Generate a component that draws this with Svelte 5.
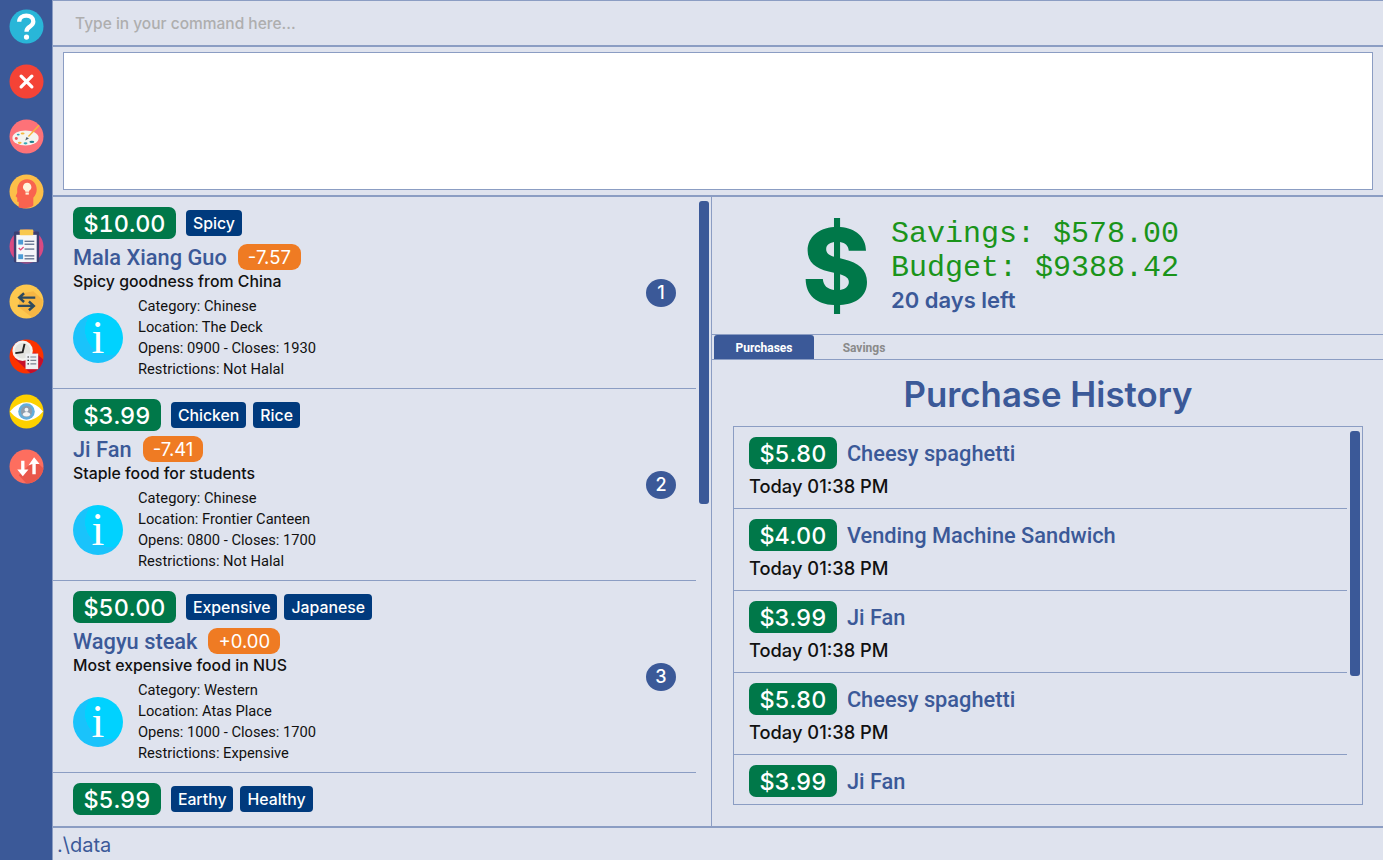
<script lang="ts">
  const foods = [
    { id: 1, price: '$10.00', tags: ['Spicy'], name: 'Mala Xiang Guo', rec: '-7.57', desc: 'Spicy goodness from China', category: 'Chinese', location: 'The Deck', hours: 'Opens: 0900 - Closes: 1930', restrictions: 'Not Halal' },
    { id: 2, price: '$3.99', tags: ['Chicken', 'Rice'], name: 'Ji Fan', rec: '-7.41', desc: 'Staple food for students', category: 'Chinese', location: 'Frontier Canteen', hours: 'Opens: 0800 - Closes: 1700', restrictions: 'Not Halal' },
    { id: 3, price: '$50.00', tags: ['Expensive', 'Japanese'], name: 'Wagyu steak', rec: '+0.00', desc: 'Most expensive food in NUS', category: 'Western', location: 'Atas Place', hours: 'Opens: 1000 - Closes: 1700', restrictions: 'Expensive' },
    // Only the top row of this card is in view
    { id: 4, price: '$5.99', tags: ['Earthy', 'Healthy'] }
  ];

  const purchases = [
    { price: '$5.80', name: 'Cheesy spaghetti', when: 'Today 01:38 PM' },
    { price: '$4.00', name: 'Vending Machine Sandwich', when: 'Today 01:38 PM' },
    { price: '$3.99', name: 'Ji Fan', when: 'Today 01:38 PM' },
    { price: '$5.80', name: 'Cheesy spaghetti', when: 'Today 01:38 PM' },
    { price: '$3.99', name: 'Ji Fan' }
  ];
</script>

<div class="app">
  <nav class="sidebar">
    <!-- help -->
    <svg class="icon" viewBox="0 0 36 36"><circle cx="18" cy="18" r="17.5" fill="#29b6d8"/><path d="M10.500 13C10.500 9 14 6.800 17.800 6.800C22 6.800 25 9.300 25 12.800C25 15.800 23 17 21 18.400C19.200 19.600 18 20.500 18 23.500" fill="none" stroke="#fff" stroke-width="4.400"/><circle cx="18" cy="28.800" r="2.700" fill="#fff"/></svg>
    <!-- close -->
    <svg class="icon" viewBox="0 0 36 36"><circle cx="18" cy="18" r="17.500" fill="#f44336"/><path d="M12.500 12.500l11 11M23.500 12.500l-11 11" stroke="#fff" stroke-width="3.400" stroke-linecap="round"/></svg>
    <!-- palette -->
    <svg class="icon" viewBox="0 0 36 36"><circle cx="18" cy="18" r="17.500" fill="#fd7278"/><ellipse cx="17" cy="19.500" rx="13.500" ry="7.800" fill="#f5f4ef"/><circle cx="7.500" cy="20" r="1.500" fill="#f05a5a"/><ellipse cx="11" cy="24.500" rx="2" ry="1.100" fill="#f6b73c"/><ellipse cx="17" cy="25" rx="2" ry="1.100" fill="#35a7b5"/><ellipse cx="23.500" cy="23.500" rx="2.500" ry="1.200" fill="#1f7f8c"/><ellipse cx="14" cy="15" rx="2" ry="1" fill="#f6b73c"/><ellipse cx="9.500" cy="16" rx="1.500" ry=".9" fill="#35a7b5"/><path d="M20 18L31 6.500" stroke="#f6b73c" stroke-width="1.400"/><path d="M18 18.500l2.500 1.500-3.800 2z" fill="#4f6272"/></svg>
    <!-- head with bulb -->
    <svg class="icon" viewBox="0 0 36 36"><circle cx="18" cy="18" r="17.500" fill="#fcbf49"/><path d="M10 34.500V28.500H8.500V24.500L6.800 22.800C7.500 21 8.500 20 8.500 18.500C7.800 11 12 5.500 18.500 5.500C24.500 5.500 28.500 10 28.500 16C28.500 19.500 27 22 25 24.500V32.500C22 35.500 14 36 10 34.500z" fill="#f9634f"/><path d="M18.700 9a4.300 4.300 0 0 1 2.500 7.800c-.5.500-.6 1-.6 1.500h-3.800c0-.5-.1-1-.6-1.500a4.300 4.300 0 0 1 2.500-7.800z" fill="#fff3dc"/><rect x="17" y="19" width="3.400" height="2.200" fill="#fff3dc"/></svg>
    <!-- clipboard -->
    <svg class="icon" viewBox="0 0 36 36"><circle cx="18" cy="18" r="17.500" fill="#d94a82"/><rect x="5" y="2.500" width="26" height="32" rx="1.500" fill="#3b3f72"/><rect x="7.500" y="6" width="21" height="28" fill="#f5f6fa"/><rect x="11" y="0.500" width="14" height="6" rx="1" fill="#f8c850"/><rect x="9.500" y="11" width="5" height="5" fill="#4c9bd6"/><rect x="16" y="12" width="10" height="1.300" fill="#5b6b8a"/><rect x="16" y="15" width="10" height="1.300" fill="#5b6b8a"/><path d="M10 19.500l2 2 3-3" stroke="#e0457b" stroke-width="1.300" fill="none"/><rect x="16" y="20" width="10" height="1.300" fill="#5b6b8a"/><rect x="9.500" y="26" width="5" height="5" fill="#4c9bd6"/><rect x="16" y="27" width="10" height="1.300" fill="#5b6b8a"/><rect x="16" y="30" width="10" height="1.300" fill="#5b6b8a"/></svg>
    <!-- swap -->
    <svg class="icon" viewBox="0 0 36 36"><circle cx="18" cy="18" r="17.500" fill="#fdc84f"/><path d="M11 10L25 7.500L34.500 16A17.500 17.500 0 0 1 24 34.500L10 24z" fill="#f0a83c" opacity=".55"/><path d="M27 14H11.500M15.500 9.500L10.500 14L15.500 18.500M9 22.500H24.500M20.500 18L25.500 22.500L20.500 27" fill="none" stroke="#2e4a5e" stroke-width="2.500"/></svg>
    <!-- clock and list -->
    <svg class="icon" viewBox="0 0 36 36"><circle cx="18" cy="18" r="17.500" fill="#fb3200"/><path d="M6 20L22 35.200C29 33.500 34 28 35.300 21L27 14z" fill="#c60f2b"/><circle cx="14" cy="12" r="10.500" fill="#f4f4f0"/><circle cx="14" cy="12" r="8" fill="#e3e3df"/><path d="M6.500 14.500L14 13.500L16 5" stroke="#222" stroke-width="2" fill="none"/><rect x="17" y="15" width="13" height="16" fill="#eef0f4"/><path d="M22 18.500h6M22 22h6M22 25.500h6" stroke="#7a8090" stroke-width="1.200"/><path d="M19 18.500h1.500M19 22h1.500M19 25.500h1.500" stroke="#222" stroke-width="1.200"/></svg>
    <!-- eye -->
    <svg class="icon" viewBox="0 0 36 36"><circle cx="18" cy="18" r="17.500" fill="#fdd100"/><path d="M1 18C6 12 12 8.500 18 8.500S30 12 35 18c-5 6-11 9.500-17 9.500S6 24 1 18z" fill="#fff"/><circle cx="18" cy="18" r="8.500" fill="#64aedb"/><circle cx="18" cy="18" r="5.800" fill="#8e9cab"/><circle cx="18" cy="16.200" r="2" fill="#f2f4f6"/><path d="M14 21.500c.4-2.200 2.200-3 4-3s3.600.8 4 3a5.800 5.800 0 0 1-8 0z" fill="#f2f4f6"/></svg>
    <!-- sort -->
    <svg class="icon" viewBox="0 0 36 36"><circle cx="18" cy="18" r="17.500" fill="#fd6e5f"/><path d="M10 27L18 35.500C26 35.500 34 29 35.500 20L26 11z" fill="#e9574b"/><path d="M12.500 12h3.400v9H20L14.200 28L8.500 21h4zM20 17L25.800 8.500L31.500 15.500H27.500V26H24V15.500z" fill="#fff"/></svg>
  </nav>

  <div class="main">
    <div class="command">Type in your command here...</div>
    <div class="result-wrap"><div class="result"></div></div>

    <div class="panels">
      <div class="food-panel">
        <div class="food-list">
          {#each foods as food (food.id)}
            <article class="food" class:partial={!food.name}>
              <div class="food-body">
                <div class="row">
                  <span class="price">{food.price}</span>
                  <span class="tags">
                    {#each food.tags as tag}<span class="tag">{tag}</span>{/each}
                  </span>
                </div>
                {#if food.name}
                  <div class="row name-row">
                    <span class="name">{food.name}</span>
                    <span class="rec">{food.rec}</span>
                  </div>
                  <div class="desc">{food.desc}</div>
                  <div class="details">
                    <div class="info">i</div>
                    <div class="lines">
                      <div>Category: {food.category}</div>
                      <div>Location: {food.location}</div>
                      <div>{food.hours}</div>
                      <div>Restrictions: {food.restrictions}</div>
                    </div>
                  </div>
                {/if}
              </div>
              {#if food.name}<span class="index">{food.id}</span>{/if}
            </article>
          {/each}
        </div>
        <div class="thumb food-thumb"></div>
      </div>

      <div class="right">
        <section class="stats">
          <span class="dollar">$</span>
          <div class="stat-text">
            <div class="mono">Savings: $578.00</div>
            <div class="mono">Budget: $9388.42</div>
            <div class="days">20 days left</div>
          </div>
        </section>

        <div class="tabs">
          <span class="tab active">Purchases</span>
          <span class="tab">Savings</span>
        </div>

        <section class="history">
          <h1>Purchase History</h1>
          <div class="history-list">
            {#each purchases as p}
              <div class="purchase" class:partial={!p.when}>
                <div class="row purchase-top">
                  <span class="price">{p.price}</span>
                  <span class="name purchase-name">{p.name}</span>
                </div>
                {#if p.when}<div class="when">{p.when}</div>{/if}
              </div>
            {/each}
            <div class="thumb history-thumb"></div>
          </div>
        </section>
      </div>
    </div>

    <footer class="status">.\data</footer>
  </div>
</div>

<style>
  :global(body) {
    margin: 0;
    background: #dfe3ee;
    font-family: Inter, "Liberation Sans", sans-serif;
  }

  .app {
    display: flex;
    width: 1383px;
    height: 860px;
    overflow: hidden;
    background: #dfe3ee;
    font-family: Inter, "Liberation Sans", sans-serif;
  }

  .sidebar {
    width: 53px;
    flex-shrink: 0;
    box-sizing: border-box;
    background: #3b5998;
    border-right: 1px solid #8b9dc3;
    display: flex;
    flex-direction: column;
    align-items: center;
    gap: 20px;
    padding-top: 9px;
  }

  .icon {
    width: 35px;
    height: 35px;
    flex-shrink: 0;
    margin-left: 1px;
  }

  .main {
    flex: 1;
    min-width: 0;
    display: flex;
    flex-direction: column;
  }

  .command {
    height: 47px;
    box-sizing: border-box;
    flex-shrink: 0;
    border-top: 1px solid #8b9dc3;
    border-bottom: 2px solid #8b9dc3;
    padding: 14px 0 0 22px;
    font-size: 15.5px;
    font-weight: 500;
    line-height: 18px;
    color: #aeaeae;
  }

  .result-wrap {
    height: 150px;
    flex-shrink: 0;
    box-sizing: border-box;
    padding: 5px 10px;
    border-bottom: 2px solid #8b9dc3;
  }

  .result {
    height: 138px;
    box-sizing: border-box;
    background: #fff;
    border: 1px solid #8b9dc3;
  }

  .panels {
    flex: 1;
    min-height: 0;
    display: flex;
  }

  .food-panel {
    position: relative;
    width: 659px;
    flex-shrink: 0;
    box-sizing: border-box;
    border-right: 1px solid #8b9dc3;
    overflow: hidden;
  }

  .food {
    width: 643px;
    height: 192px;
    box-sizing: border-box;
    border-bottom: 1px solid #8b9dc3;
    padding: 10px 20px 0 20px;
    display: flex;
    justify-content: space-between;
  }

  .food.partial {
    border-bottom: none;
  }

  .food-body {
    display: flex;
    flex-direction: column;
  }

  .row {
    display: flex;
    align-items: center;
  }

  .price {
    box-sizing: border-box;
    height: 32px;
    padding: 0 10.5px;
    border-radius: 7px;
    background: #007849;
    color: #fff;
    font-size: 23.4px;
    font-weight: 450;
    font-variant-numeric: tabular-nums;
    line-height: 33px;
  }

  .tags {
    display: flex;
    gap: 7px;
    margin-left: 10px;
  }

  .tag {
    height: 26px;
    padding: 0 7px;
    border-radius: 4px;
    background: #003a7d;
    color: #fff;
    font-size: 15.8px;
    font-weight: 500;
    line-height: 27px;
  }

  .name-row {
    margin-top: 5px;
    height: 26px;
  }

  .name {
    color: #3b5998;
    font-family: Roboto, sans-serif;
    font-size: 21.8px;
    font-weight: 500;
    line-height: 26px;
    padding-top: 2px;
  }

  .rec {
    margin-left: 11px;
    height: 26px;
    padding: 0 10px;
    border-radius: 9px;
    background: #ef7b23;
    color: #fff;
    font-size: 18.5px;
    line-height: 26px;
  }

  .desc {
    margin-top: 2px;
    font-size: 15.85px;
    font-weight: 500;
    line-height: 20px;
    color: #111;
  }

  .details {
    display: flex;
    align-items: center;
    margin-top: 4px;
  }

  .info {
    width: 50px;
    height: 50px;
    flex-shrink: 0;
    margin-top: -1px;
    border-radius: 50%;
    background: radial-gradient(circle 25px at 37px 17px, #00d2ff 99%, #1ac3fb 100%);
    color: #fff;
    font-family: "Liberation Serif", serif;
    font-size: 46px;
    line-height: 50px;
    text-align: center;
  }

  .lines {
    margin-left: 15px;
    font-family: Roboto, sans-serif;
    font-size: 14.7px;
    line-height: 21px;
    color: #111;
  }

  .index {
    width: 30px;
    height: 28px;
    margin-top: 72px;
    border-radius: 50%;
    background: #3b5998;
    color: #fff;
    font-size: 18px;
    font-weight: 500;
    line-height: 28px;
    text-align: center;
  }

  .thumb {
    position: absolute;
    width: 10px;
    border-radius: 3px;
    background: #3b5998;
  }

  .food-thumb {
    left: 646px;
    top: 4px;
    height: 303px;
  }

  .right {
    flex: 1;
    min-width: 0;
    display: flex;
    flex-direction: column;
  }

  .stats {
    height: 138px;
    flex-shrink: 0;
    box-sizing: border-box;
    border-bottom: 1px solid #8b9dc3;
    display: flex;
    align-items: center;
    padding-left: 90px;
  }

  .dollar {
    width: 90px;
    font-size: 104px;
    font-weight: 800;
    line-height: 116px;
    color: #007849;
  }

  .stat-text {
    margin-left: -1px;
  }

  .mono {
    font-family: "Liberation Mono", monospace;
    font-size: 30px;
    line-height: 34px;
    color: #1a941a;
    position: relative;
    top: 1px;
  }

  .days {
    font-size: 22px;
    font-weight: 600;
    line-height: 32px;
    color: #3b5998;
  }

  .tabs {
    height: 25px;
    flex-shrink: 0;
    box-sizing: border-box;
    border-bottom: 1px solid #8b9dc3;
    display: flex;
    padding-left: 2px;
  }

  .tab {
    width: 100px;
    height: 24px;
    border-radius: 3px 3px 0 0;
    font-family: Roboto, sans-serif;
    font-size: 12px;
    font-weight: 700;
    line-height: 26px;
    text-align: center;
    color: #8a8a8a;
  }

  .tab.active {
    background: #3b5998;
    color: #fff;
  }

  .history {
    flex: 1;
    min-height: 0;
    padding: 0 20px 21px 21px;
    display: flex;
    flex-direction: column;
  }

  h1 {
    margin: 0;
    height: 66px;
    font-size: 34.8px;
    font-weight: 600;
    line-height: 68px;
    text-align: center;
    color: #3b5998;
  }

  .history-list {
    position: relative;
    flex: 1;
    min-height: 0;
    box-sizing: border-box;
    border: 1px solid #8b9dc3;
    overflow: hidden;
  }

  .purchase {
    width: 613px;
    height: 82px;
    box-sizing: border-box;
    border-bottom: 1px solid #8b9dc3;
    padding: 10px 15px 0;
  }

  .purchase.partial {
    border-bottom: none;
  }

  .purchase-top {
    gap: 10px;
  }

  .when {
    margin-top: 6px;
    font-size: 18.3px;
    font-weight: 450;
    line-height: 22px;
    color: #111;
  }

  .history-thumb {
    left: 616px;
    top: 4px;
    height: 245px;
  }

  .status {
    height: 34px;
    flex-shrink: 0;
    box-sizing: border-box;
    border-top: 2px solid #8b9dc3;
    padding-left: 4px;
    font-size: 20px;
    line-height: 34px;
    color: #3b5998;
  }
</style>
